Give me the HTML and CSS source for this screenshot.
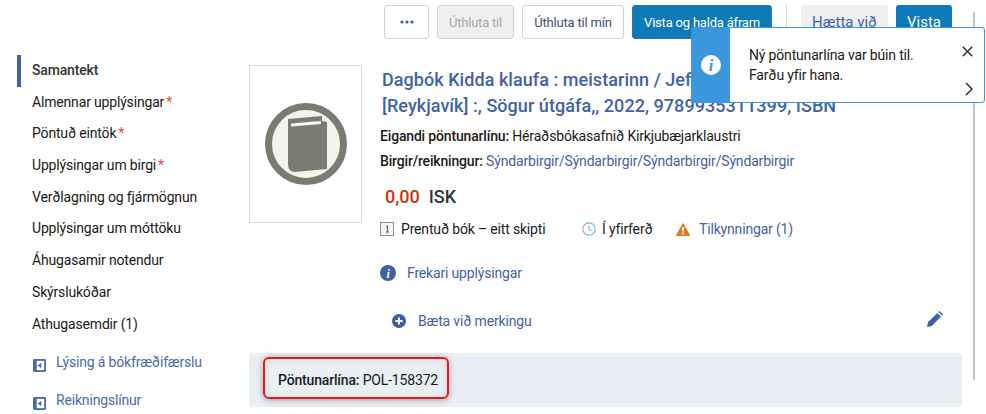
FILE: index.html
```html
<!DOCTYPE html>
<html lang="is">
<head>
<meta charset="utf-8">
<title>Pöntunarlína</title>
<link rel="stylesheet" href="styles.css">
</head>
<body>
<div class="page">
  <header class="actions">
    <button class="btn btn-more" aria-label="Meira"><svg class="dots" viewBox="0 0 14 4"><circle cx="2" cy="2" r="1.6"/><circle cx="7" cy="2" r="1.6"/><circle cx="12" cy="2" r="1.6"/></svg></button>
    <button class="btn btn-disabled">Úthluta til</button>
    <button class="btn">Úthluta til mín</button>
    <button class="btn btn-primary btn-wide">Vista og halda áfram</button>
    <span class="divider"></span>
    <button class="btn btn-large btn-cancel">Hætta við</button>
    <button class="btn btn-large btn-primary btn-save">Vista</button>
  </header>
  <div class="layout">
    <nav class="sidebar">
      <ul class="menu">
        <li class="menu-item active">Samantekt</li>
        <li class="menu-item">Almennar upplýsingar<span class="req">*</span></li>
        <li class="menu-item">Pöntuð eintök<span class="req">*</span></li>
        <li class="menu-item">Upplýsingar um birgi<span class="req">*</span></li>
        <li class="menu-item">Verðlagning og fjármögnun</li>
        <li class="menu-item">Upplýsingar um móttöku</li>
        <li class="menu-item">Áhugasamir notendur</li>
        <li class="menu-item">Skýrslukóðar</li>
        <li class="menu-item">Athugasemdir (1)</li>
      </ul>
      <a class="side-link side-link-first">
        <svg class="side-icon" viewBox="0 0 14 14"><rect x="0" y="0" width="14" height="14" rx="1.5" fill="#4a6cab"/><rect x="4" y="2" width="8" height="10" fill="#fff"/><path d="M5 7h3.5M8.5 4.8v4.4L6 7z" fill="#4a6cab" stroke="#4a6cab" stroke-width="1"/></svg>
        <span>Lýsing á bókfræðifærslu</span>
      </a>
      <a class="side-link">
        <svg class="side-icon" viewBox="0 0 14 14"><rect x="0" y="0" width="14" height="14" rx="1.5" fill="#4a6cab"/><rect x="4" y="2" width="8" height="10" fill="#fff"/><path d="M5 7h3.5M8.5 4.8v4.4L6 7z" fill="#4a6cab" stroke="#4a6cab" stroke-width="1"/></svg>
        <span>Reikningslínur</span>
      </a>
    </nav>
    <main class="main">
      <section class="summary">
        <div class="thumb">
          <svg class="thumb-icon" viewBox="0 0 84 84">
            <circle cx="42" cy="42" r="37.5" fill="#f3f3f0" stroke="#7c7b72" stroke-width="7"/>
            <path d="M24 17 L58 14 V19 L63 20 V67 L31 70 Q24 70 24 62 Z" fill="#7c7b72"/>
            <path d="M27 21.5 L57 19 V22 L27 24.5 Z" fill="#fbfbf8"/>
          </svg>
        </div>
        <div class="details">
          <h1 class="title"><span>Dagbók Kidda klaufa : meistarinn / Jeff Kinney</span><span>[Reykjavík] :, Sögur útgáfa,, 2022, 9789935311399, ISBN</span></h1>
          <p class="meta meta-owner"><b>Eigandi pöntunarlínu:</b> Héraðsbókasafnið Kirkjubæjarklaustri</p>
          <p class="meta meta-vendor"><b>Birgir/reikningur:</b> <a>Sýndarbirgir/Sýndarbirgir/Sýndarbirgir/Sýndarbirgir</a></p>
          <p class="price"><span class="amount">0,00</span><span class="currency">ISK</span></p>
          <div class="status-row">
            <span class="status status-format">
              <svg class="ico-format" viewBox="0 0 14 14"><rect x=".5" y=".5" width="13" height="13" fill="#f4f4f4" stroke="#8f8f8f"/><path d="M6 4.6 7.4 3.8V10M6 10h3" fill="none" stroke="#555" stroke-width="1"/></svg>
              Prentuð bók – eitt skipti
            </span>
            <span class="status status-review">
              <svg class="ico-clock" viewBox="0 0 14 14"><circle cx="7" cy="7" r="6.2" fill="none" stroke="#7fb9dc" stroke-width="1.2"/><path d="M7 3.4V7.4L9.6 9" fill="none" stroke="#7fb9dc" stroke-width="1.2"/></svg>
              Í yfirferð
            </span>
            <span class="status status-alert">
              <svg class="ico-warn" viewBox="0 0 14 13"><path d="M7 .6 13.7 12.4H.3Z" fill="#dc7d27" stroke="#dc7d27" stroke-linejoin="round"/><path d="M7 4v4.4" stroke="#fff" stroke-width="1.7"/><circle cx="7" cy="10.4" r="1" fill="#fff"/></svg>
              <a>Tilkynningar (1)</a>
            </span>
          </div>
          <a class="more">
            <svg class="ico-info" viewBox="0 0 16 16"><circle cx="8" cy="8" r="8" fill="#3f62a8"/><text x="8" y="12.6" text-anchor="middle" class="ico-i">i</text></svg>
            Frekari upplýsingar
          </a>
        </div>
      </section>
      <div class="tag-row">
        <a class="add-tag">
          <svg class="ico-plus" viewBox="0 0 14 14"><circle cx="7" cy="7" r="7" fill="#3f5f9e"/><path d="M7 3.4v7.2M3.4 7h7.2" stroke="#fff" stroke-width="2"/></svg>
          Bæta við merkingu
        </a>
        <svg class="ico-pen" viewBox="0 0 16 16"><path d="M0 16 1 11 10.4 1.9 14 5.6 4.8 15Z M11.3 1 12.4 0 16 3.6 15 4.7Z" fill="#3f62a8"/></svg>
      </div>
      <div class="order-panel">
        <div class="order-highlight"><b>Pöntunarlína:</b> POL-158372</div>
      </div>
    </main>
  </div>
  <div class="rail"></div>
  <aside class="toast">
    <div class="toast-side">
      <svg class="toast-info" viewBox="0 0 20 20"><circle cx="10" cy="10" r="10" fill="#fff"/><text x="10" y="16" text-anchor="middle" class="toast-i">i</text></svg>
    </div>
    <div class="toast-body">
      <p>Ný pöntunarlína var búin til.</p>
      <p>Farðu yfir hana.</p>
    </div>
    <div class="toast-controls">
      <svg class="toast-x" viewBox="0 0 10 10"><path d="M.7.7l8.6 8.6M9.3.7.7 9.3" stroke="#333" stroke-width="1.4"/></svg>
      <svg class="toast-chev" viewBox="0 0 8 14"><path d="M1 1l6 6-6 6" fill="none" stroke="#222" stroke-width="1.4"/></svg>
    </div>
  </aside>
</div>
</body>
</html>
```
FILE: styles.css
```css
* { box-sizing: border-box; }
html, body { margin: 0; padding: 0; background: #fff; }
body { font-family: Roboto, "Liberation Sans", sans-serif; font-size: 14px; letter-spacing: -.17px; color: #1a1a1a; overflow: hidden; }
p, h1, ul { margin: 0; padding: 0; }
a { color: #3f62a8; }
.page { position: relative; width: 986px; height: 414px; overflow: hidden; }

.actions { display: flex; align-items: flex-start; padding: 5px 0 0 384px; height: 54px; }
.btn { height: 34px; margin-right: 8px; padding: 0; border: 1px solid #d4d4d4; border-radius: 3px; background: #fff; color: #3f4f75; font: 13px Roboto, sans-serif; letter-spacing: -.2px; width: 102px; }
.btn-more { width: 45px; display: flex; align-items: center; justify-content: center; }
.dots { width: 14px; height: 4px; fill: #3f5f9e; }
.btn-disabled { width: 77px; background: #efefef; color: #a8a8a8; }
.btn-primary { background: #0f7ab8; border-color: #0f7ab8; color: #fff; }
.btn-wide { width: 140px; margin-right: 14px; border-color: #3f6f9e; }
.divider { width: 1px; height: 34px; background: #d8d8d8; margin-right: 14px; }
.btn-large { font-size: 15px; letter-spacing: 0; border-color: transparent; }
.btn-cancel { width: 87px; background: #efefef; color: #3f62a8; }
.btn-save { width: 56px; margin-right: 0; }

.layout { display: flex; }
.sidebar { width: 249px; margin-left: 17px; flex: none; margin-right: -17px; }
.menu { list-style: none; margin-top: 1px; }
.menu-item { height: 31.7px; line-height: 31.7px; padding-left: 15px; white-space: nowrap; }
.menu-item.active { font-weight: 500; color: #333; border-left: 4px solid #3f62a8; padding-left: 11px; }
.req { color: #f2453d; margin-left: 2px; }
.side-link { display: flex; align-items: flex-start; gap: 10px; padding-left: 16px; height: 38px; line-height: 20px; color: #4a6cab; }
.side-link-first { margin-top: 12px; }
.side-icon { width: 13px; height: 13px; margin-top: 7px; flex: none; }

.main { flex: 1; min-width: 0; padding-right: 24px; margin-top: 11px; }
.summary { display: flex; gap: 20px; height: 246px; }
.thumb { width: 113px; height: 158px; border: 1px solid #dcdcdc; display: flex; align-items: center; justify-content: center; flex: none; }
.thumb-icon { width: 84px; height: 84px; }
.details { flex: 1; min-width: 0; margin-left: -2px; }
.title { font-size: 18px; line-height: 26px; letter-spacing: .05px; font-weight: 500; color: #3f62a8; margin-left: 2px; margin-top: 2px; white-space: nowrap; }
.title span { display: block; }
.meta { font-size: 14px; line-height: 20px; }
.meta b { font-weight: 500; }
.meta-owner { margin-top: 7px; }
.meta-vendor { margin-top: 5px; }
.price { margin: 14px 0 0 5px; font-size: 18px; line-height: 24px; letter-spacing: 0; font-weight: 500; }
.amount { color: #cf3210; margin-right: 9px; }
.currency { color: #333; }
.status-row { display: flex; align-items: center; margin-top: 10px; height: 20px; }
.status { display: inline-flex; align-items: center; gap: 6px; white-space: nowrap; }
.status-format { width: 202px; }
.status-format .ico-format { margin-right: 1px; }
.status-review { width: 94px; }
.ico-format { width: 14px; height: 14px; }
.ico-clock { width: 14px; height: 14px; }
.ico-warn { width: 14px; height: 13px; margin-right: 3px; }
.more { display: flex; align-items: center; gap: 11px; margin-top: 24px; height: 20px; }
.ico-info { width: 16px; height: 16px; }
.ico-i { font: italic 700 12px "Liberation Serif", serif; fill: #fff; }
.tag-row { display: flex; justify-content: space-between; align-items: center; height: 20px; padding: 0 19px 0 143px; }
.add-tag { display: flex; align-items: center; gap: 12px; }
.ico-plus { width: 14px; height: 14px; }
.ico-pen { width: 16px; height: 16px; margin-top: -5px; }
.order-panel { margin-top: 22px; height: 54px; background: #e9eff3; border-radius: 4px; padding: 4px 14px; }
.order-highlight { width: 186px; height: 42px; border: 2px solid #f0141c; border-radius: 6px; box-shadow: 0 1px 7px rgba(60,60,60,.4), inset 0 0 6px rgba(60,60,60,.12); padding-left: 13px; line-height: 42px; }
.order-highlight b { font-weight: 500; }

.toast { position: absolute; left: 691px; top: 27px; width: 294px; height: 76px; display: flex; background: #fff; border: 1px solid #3a97db; border-radius: 3px; }
.toast-side { width: 38px; background: #3a97db; display: flex; align-items: center; justify-content: center; flex: none; }
.toast-info { width: 20px; height: 20px; }
.toast-i { font: italic 700 16px "Liberation Serif", serif; fill: #3a97db; }
.toast-body { flex: 1; padding: 17px 0 0 19px; line-height: 20px; }
.toast-controls { width: 30px; position: relative; }
.toast-x { position: absolute; left: 8px; top: 18px; width: 11px; height: 11px; }
.toast-chev { position: absolute; left: 11px; top: 54px; width: 8px; height: 14px; }
.rail { position: absolute; left: 973px; top: 12px; width: 2px; height: 368px; background: #c4c4c4; }
```
